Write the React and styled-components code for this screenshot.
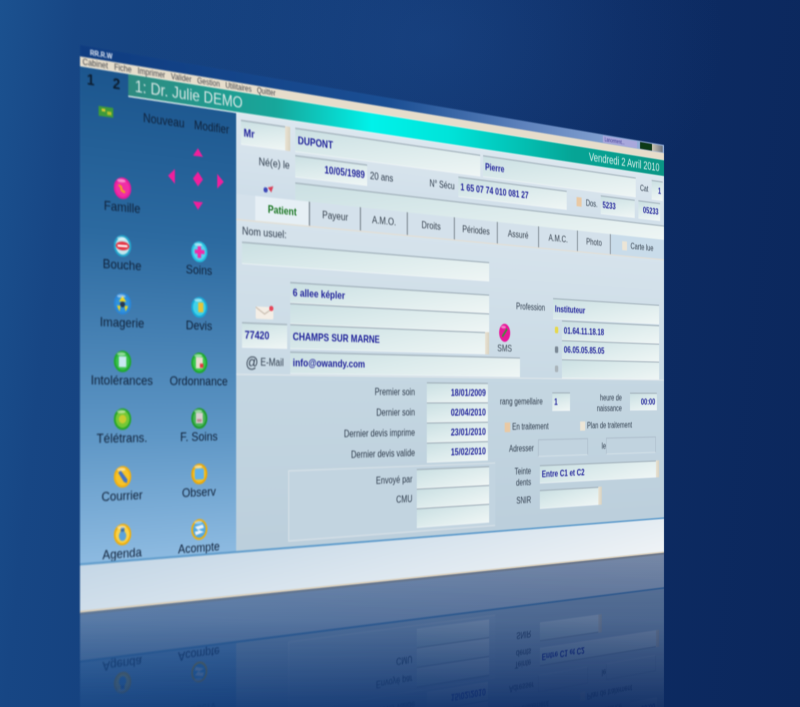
import React from "react";
import styled, { createGlobalStyle } from "styled-components";

const W = 1300;
const H = 800;

/* Projects a flat W x H window on four screen corners (TL, TR, BR, BL). */
function quadMatrix([[x0, y0], [x1, y1], [x2, y2], [x3, y3]]) {
  const dx1 = x1 - x2, dx2 = x3 - x2, sx = x0 - x1 + x2 - x3;
  const dy1 = y1 - y2, dy2 = y3 - y2, sy = y0 - y1 + y2 - y3;
  const den = dx1 * dy2 - dx2 * dy1;
  const g = (sx * dy2 - dx2 * sy) / den;
  const h = (dx1 * sy - sx * dy1) / den;
  const a = x1 - x0 + g * x1, b = x3 - x0 + h * x3;
  const d = y1 - y0 + g * y1, e = y3 - y0 + h * y3;
  return `matrix3d(${a / W},${d / W},0,${g / W},${b / H},${e / H},0,${h / H},0,0,1,0,${x0},${y0},0,1)`;
}
const FRONT = quadMatrix([[80, 45], [664, 145], [664, 553], [80, 613]]);
const MIRROR = quadMatrix([[80, 1181], [664, 961], [664, 553], [80, 613]]);

const Global = createGlobalStyle`
  html, body { margin: 0; padding: 0; background: #0e2f68; }
`;

const Stage = styled.div`
  position: relative;
  width: 800px;
  height: 707px;
  overflow: hidden;
  font-family: "Liberation Sans", Arial, sans-serif;
  background:
    radial-gradient(420px 300px at 430px 40px, rgba(40, 90, 160, 0.28), transparent 70%),
    linear-gradient(96deg, #1b518f 0%, #174684 9%, #123a76 38%, #0d2c64 72%, #0b275c 100%);
`;

const Plane = styled.div`
  position: absolute;
  left: 0;
  top: 0;
  width: ${W}px;
  height: ${H}px;
  transform-origin: 0 0;
  transform: ${(p) => (p.$mirror ? MIRROR : FRONT)};
  filter: blur(0.85px);
`;

const ReflectionFade = styled.div`
  position: absolute;
  inset: 0;
  mask-image: linear-gradient(180deg, rgba(0,0,0,0.48) 550px, rgba(0,0,0,0.36) 620px, rgba(0,0,0,0.06) 707px);
`;

const Win = styled.div`
  width: 100%;
  height: 100%;
  display: flex;
  flex-direction: column;
  color: #27374a;
  font-size: 17px;
`;

const TitleBar = styled.div`
  height: 16px;
  display: flex;
  align-items: center;
  justify-content: space-between;
  padding: 0 4px 0 16px;
  background: linear-gradient(90deg, #0f3c80 0%, #1b4f94 45%, #5f83bd 70%, #9cb6de 100%);
`;
const AppName = styled.span`
  font-size: 10px;
  font-weight: bold;
  color: #e8eef8;
`;
const Tray = styled.div`
  display: flex;
  align-items: center;
`;
const TrayText = styled.span`
  font-size: 10px;
  color: #35318e;
  background: #a9a8dc;
  padding: 0 5px;
  width: 100px;
  margin-right: 9px;
  box-sizing: border-box;
  line-height: 13px;
`;
const TrayGauge = styled.span`
  width: 36px;
  height: 13px;
  box-sizing: border-box;
  background: #0c3a16;
  border: 1px solid #05230b;
`;
const TrayButtons = styled.span`
  width: 33px;
  height: 13px;
  background: linear-gradient(90deg, #cfc7b4, #6d7480);
`;

const MenuBar = styled.div`
  height: 14px;
  display: flex;
  align-items: center;
  gap: 10px;
  padding-left: 4px;
  background: #e6ddcb;
  border-bottom: 1px solid #f4efe4;
  box-sizing: border-box;
`;
const MenuItem = styled.span`
  font-size: 12px;
  line-height: 14px;
  color: #44464c;
`;

const Body = styled.div`
  flex: 1;
  min-height: 0;
  display: flex;
  flex-direction: column;
  background: linear-gradient(180deg, #1c568e 0%, #2c6aa0 30%, #5f97c6 68%, #8fbce2 92%);
`;
const HeadRow = styled.div`
  height: 33px;
  flex: none;
  display: flex;
`;
const Numbers = styled.div`
  width: 79px;
  display: flex;
  gap: 30px;
  padding-left: 11px;
  box-sizing: border-box;
  align-items: center;
  font-size: 22px;
  font-weight: bold;
  color: #0c1c2e;
`;
const Band = styled.div`
  flex: 1;
  display: flex;
  justify-content: space-between;
  align-items: center;
  padding: 0 14px 0 11px;
  background: linear-gradient(90deg, #2f8a80 0%, #17a79b 22%, #00f2ea 38%, #00e4da 52%, #06a596 78%, #0a9585 100%);
  border-bottom: 2px solid #e3edf0;
  box-sizing: border-box;
`;
const BandTitle = styled.span`
  font-size: 24px;
  color: #dbe8e6;
`;
const BandDate = styled.span`
  font-size: 22px;
  color: #e6f3ef;
`;

const Columns = styled.div`
  height: 667px;
  flex: none;
  display: flex;
`;

const Sidebar = styled.div`
  width: 270px;
  flex: none;
  display: flex;
  flex-direction: column;
  overflow: hidden;
`;
const ToolRow = styled.div`
  height: 47px;
  flex: none;
  padding-top: 8px;
  box-sizing: border-box;
  display: flex;
  align-items: center;
  font-size: 18px;
  color: #0f2038;
`;
const FlagSlot = styled.div`
  width: 100px;
  padding-left: 30px;
  box-sizing: border-box;
`;
const ToolLabel = styled.span`
  width: ${(p) => p.$w}px;
  text-align: center;
`;
const SideColumns = styled.div`
  display: flex;
`;
const IconColumn = styled.div`
  width: ${(p) => p.$w}px;
  display: flex;
  flex-direction: column;
  padding-top: ${(p) => p.$top || 0}px;
  box-sizing: border-box;
`;
const IconItem = styled.div`
  height: 83px;
  flex: none;
  display: flex;
  flex-direction: column;
  align-items: center;
  font-size: 19px;
  line-height: 24px;
  color: #0f2038;
`;
const DPad = styled.div`
  display: grid;
  grid-template-columns: repeat(3, 44px);
  grid-auto-rows: 40px;
  place-items: center;
  width: 132px;
  margin: 0 0 33px -4px;
`;

const Panel = styled.div`
  flex: 1;
  display: flex;
  flex-direction: column;
  min-width: 0;
  background: #cbdbe6;
`;
const IdBlock = styled.div`
  height: 123px;
  flex: none;
  padding-top: 9px;
  box-sizing: border-box;
  display: flex;
  flex-direction: column;
  background: linear-gradient(180deg, #dce7ef, #cfdee9);
`;
const Row = styled.div`
  display: flex;
  flex: none;
  align-items: ${(p) => p.$align || "stretch"};
  height: ${(p) => p.$h}px;
  margin-top: ${(p) => p.$mt || 0}px;
  padding-left: ${(p) => p.$pl || 0}px;
`;
const Label = styled.span`
  display: flex;
  align-items: center;
  justify-content: ${(p) => (p.$right ? "flex-end" : "flex-start")};
  width: ${(p) => (p.$w ? `${p.$w}px` : "auto")};
  margin-left: ${(p) => p.$ml || 0}px;
  flex: none;
  font-size: ${(p) => p.$size || 17}px;
  color: #2d3a4a;
  white-space: nowrap;
`;
const StackLabel = styled.span`
  width: ${(p) => p.$w}px;
  margin-left: ${(p) => p.$ml || 0}px;
  flex: none;
  text-align: right;
  font-size: 16px;
  line-height: 20px;
  color: #2d3a4a;
`;
const Field = styled.div`
  flex: none;
  width: ${(p) => (p.$w ? `${p.$w}px` : "auto")};
  margin-left: ${(p) => p.$ml || 0}px;
  padding: 0 5px;
  box-sizing: border-box;
  display: flex;
  align-items: center;
  justify-content: ${(p) => (p.$right ? "flex-end" : "flex-start")};
  font-size: 17px;
  font-weight: bold;
  color: #1d1f98;
  white-space: nowrap;
  border-top: 2px solid #a2b1bb;
  border-bottom: 1px solid #f4f8f9;
  background: linear-gradient(170deg, #cbe0e3 0%, #dcebec 45%, #eff6f5 100%);
`;
const GreyField = styled.div`
  flex: none;
  width: ${(p) => p.$w}px;
  margin-left: ${(p) => p.$ml || 0}px;
  box-sizing: border-box;
  border: 2px solid #aebfcc;
  border-bottom-color: #d3e0e8;
  background: #c1d3df;
`;
const Wide = styled(Field)`
  flex: 1;
`;
const SideButton = styled.div`
  flex: none;
  width: 10px;
  margin-left: ${(p) => p.$ml || 0}px;
  background: linear-gradient(90deg, #e9e2d2, #d9d2c0);
`;
const Check = styled.span`
  flex: none;
  width: 14px;
  height: 17px;
  align-self: center;
  margin-left: ${(p) => p.$ml || 0}px;
  margin-right: 5px;
  background: ${(p) => (p.$on ? "#e9c9a4" : "#ece5d6")};
`;
const PhoneMark = styled.span`
  flex: none;
  width: 9px;
  height: 12px;
  align-self: center;
  margin-right: 10px;
  border-radius: 3px;
  background: ${(p) => p.$tone};
`;
const Gap = styled.span`
  flex: none;
  width: ${(p) => p.$w}px;
`;

const Tabs = styled.div`
  height: 40px;
  display: flex;
  padding-left: 36px;
  flex: none;
  background: #d4e1eb;
  border-bottom: 2px solid #e4dfd5;
  box-sizing: border-box;
`;
const Tab = styled.div`
  width: ${(p) => p.$w}px;
  flex: ${(p) => (p.$grow ? 1 : "none")};
  display: flex;
  align-items: center;
  justify-content: center;
  gap: 6px;
  box-sizing: border-box;
  font-size: 17px;
  font-weight: ${(p) => (p.$active ? "bold" : "normal")};
  color: ${(p) => (p.$active ? "#17741f" : "#333e4a")};
  background: ${(p) => (p.$active ? "#e6eff5" : p.$grow ? "#c9dcea" : "transparent")};
  border-right: ${(p) => (p.$grow ? "none" : "3px solid #8f9aa3")};
`;

const Upper = styled.div`
  height: 236px;
  flex: none;
  display: flex;
  box-sizing: border-box;
  padding-left: 11px;
  border-bottom: 2px solid #dfe6ea;
  background: linear-gradient(180deg, #d6e3ec, #c9dae5);
`;
const UpperLeft = styled.div`
  width: 612px;
  flex: none;
  display: flex;
  flex-direction: column;
`;
const LabelLine = styled.div`
  height: 32px;
  flex: none;
  display: flex;
  align-items: center;
  font-size: 17px;
  color: #2d3a4a;
`;
const AddressWrap = styled.div`
  display: flex;
  flex: none;
  margin-top: 23px;
`;
const AddressStack = styled.div`
  width: 534px;
  flex: none;
  display: flex;
  flex-direction: column;
`;
const LeadCell = styled.div`
  width: ${(p) => p.$w || 87}px;
  margin-right: 6px;
  padding-left: ${(p) => p.$pl || 0}px;
  box-sizing: border-box;
  flex: none;
  display: flex;
  align-items: center;
  justify-content: center;
`;
const SmsBox = styled.div`
  width: 78px;
  display: flex;
  flex-direction: column;
  align-items: center;
  padding-top: 50px;
  font-size: 17px;
  gap: 2px;
  color: #3a4652;
`;
const UpperRight = styled.div`
  flex: 1;
  display: flex;
  flex-direction: column;
  margin-left: -10px;
  padding-top: 88px;
  padding-right: 15px;
`;

const Lower = styled.div`
  flex: 1;
  min-height: 0;
  display: flex;
  background: linear-gradient(180deg, #c5d7e2, #bccfdc);
`;
const LowerLeft = styled.div`
  width: 560px;
  flex: none;
  display: flex;
  flex-direction: column;
  padding: 8px 0 0 100px;
  box-sizing: border-box;
`;
const DateRow = styled.div`
  height: 34px;
  flex: none;
  display: flex;
  justify-content: flex-end;
  padding-right: 18px;
`;
const SenderBox = styled.div`
  margin-top: 4px;
  height: 112px;
  flex: none;
  box-sizing: border-box;
  border: 2px solid #d6e0e7;
  border-right: none;
  background: #c2d4e0;
  padding: 4px 0 0 0;
  display: flex;
  flex-direction: column;
`;
const SenderRow = styled.div`
  height: 33px;
  flex: none;
  display: flex;
  justify-content: flex-end;
  padding-right: 15px;
`;
const LowerRight = styled.div`
  flex: 1;
  display: flex;
  flex-direction: column;
  padding: 24px 0 0 12px;
`;

const Footer = styled.div`
  height: 70px;
  flex: none;
  background: linear-gradient(172deg, #c5d7e6 0%, #dbe6ef 50%, #eff3f6 100%);
  border-top: 3px solid #5e9bcb;
  border-bottom: 3px solid #d7ccb8;
  box-sizing: border-box;
`;

const ORBS = {
  Famille: {
    ring: "#ea1a9c",
    core: "#f02ea6",
    art: <path d="M8 10l5 2 1 5 5 2-2 3-6-3-1-5-3-2z" fill="#f4a11e" />,
  },
  Bouche: {
    ring: "#22a6cc",
    core: "#bfe8f0",
    art: (
      <>
        <ellipse cx="14" cy="15" rx="11" ry="6" fill="#e5303f" />
        <rect x="6" y="13.5" width="16" height="3" fill="#fff" />
      </>
    ),
  },
  Soins: {
    ring: "#25bfe0",
    core: "#57d4ee",
    art: <path d="M11 7h6v5h6v6h-6v6h-6v-6H6v-6h5z" fill="#f22ba6" />,
  },
  Imagerie: {
    ring: "#2a86d8",
    core: "#2f93df",
    art: (
      <>
        <path d="M14 4l6 8h-12z" fill="#f0d620" />
        <path d="M5 18l6 0-2 8z" fill="#f0d620" />
        <path d="M23 18l-6 0 2 8z" fill="#f0d620" />
        <circle cx="14" cy="16" r="4" fill="#26364f" />
      </>
    ),
  },
  Devis: {
    ring: "#19a8d8",
    core: "#3fd2ea",
    art: <rect x="12" y="8" width="9" height="14" rx="1" fill="#e6c33a" />,
  },
  "Intolérances": {
    ring: "#1fa82e",
    core: "#38c04a",
    art: <rect x="8" y="8" width="12" height="15" rx="1" fill="#c9e8f2" />,
  },
  Ordonnance: {
    ring: "#1fa82e",
    core: "#3cc64e",
    art: (
      <>
        <rect x="8" y="7" width="12" height="16" fill="#e8dcd0" />
        <rect x="15" y="16" width="6" height="6" fill="#e2353f" />
      </>
    ),
  },
  "Télétrans.": {
    ring: "#26a52a",
    core: "#74c836",
    art: <circle cx="14" cy="15" r="6" fill="#c9cc30" />,
  },
  "F. Soins": {
    ring: "#1f9a2c",
    core: "#47b457",
    art: (
      <>
        <rect x="8" y="7" width="12" height="15" fill="#d9cfcf" />
        <rect x="10" y="16" width="8" height="4" fill="#b98a92" />
      </>
    ),
  },
  Courrier: {
    ring: "#f2b010",
    core: "#f6c32a",
    art: <path d="M7 9l4-3 11 13-1 5-5-2z" fill="#3f71c8" />,
  },
  Observ: {
    ring: "#e8a80c",
    core: "#f2c22c",
    art: <rect x="6" y="7" width="16" height="16" rx="3" fill="#5fb2ea" />,
  },
  Agenda: {
    ring: "#eeae0e",
    core: "#f8d24a",
    art: (
      <>
        <ellipse cx="14" cy="17" rx="6" ry="7" fill="#5aa3dc" />
        <rect x="11" y="5" width="6" height="6" fill="#3a6ea8" />
      </>
    ),
  },
  Acompte: {
    ring: "#eeae0e",
    core: "#4fa8e4",
    art: <path d="M6 11l14-3 2 5-10 2 10 4-14 4-2-5 7-1z" fill="#e9f2f8" />,
  },
};

function Orb({ name }) {
  const o = ORBS[name];
  return (
    <svg width="29" height="31" viewBox="0 0 28 30">
      <ellipse cx="14" cy="15" rx="14" ry="15" fill={o.ring} />
      <ellipse cx="14" cy="15" rx="11" ry="12" fill={o.core} />
      {o.art}
      <ellipse cx="12" cy="4.5" rx="7" ry="2.4" fill="#ffffff" opacity="0.45" />
    </svg>
  );
}

function Arrow({ dir }) {
  const pts = {
    up: "9,0 18,12 0,12",
    down: "0,0 18,0 9,12",
    left: "12,0 12,22 0,11",
    right: "0,0 12,11 0,22",
    mid: "9,0 18,11 9,22 0,11",
  }[dir];
  const tall = dir === "left" || dir === "right" || dir === "mid";
  return (
    <svg width="18" height={tall ? 22 : 12} viewBox={`0 0 18 ${tall ? 22 : 12}`}>
      <polygon points={pts} fill="#f01f9c" />
    </svg>
  );
}

function Flag() {
  return (
    <svg width="24" height="14" viewBox="0 0 24 14">
      <rect width="24" height="14" fill="#3e9a3a" />
      <rect x="5" y="3" width="6" height="4" fill="#d4c832" />
      <rect x="14" y="6" width="7" height="5" fill="#b3c02e" />
    </svg>
  );
}
function Envelope() {
  return (
    <svg width="38" height="24" viewBox="0 0 38 24">
      <rect x="1" y="3" width="34" height="19" rx="2" fill="#f4eee6" />
      <path d="M1 4l17 10L35 4" fill="none" stroke="#c9bdb0" strokeWidth="2" />
      <circle cx="31" cy="5" r="4" fill="#e6475a" />
    </svg>
  );
}
function HeartMark() {
  return (
    <svg width="22" height="14" viewBox="0 0 22 14">
      <circle cx="6" cy="8" r="4" fill="#3d49b8" />
      <path d="M10 4l11-3-4 10z" fill="#d9415a" />
    </svg>
  );
}
function SmsOrb() {
  return (
    <svg width="28" height="32" viewBox="0 0 28 32">
      <ellipse cx="14" cy="16" rx="14" ry="16" fill="#e8189a" />
      <path d="M8 23L20 9" stroke="#3f8f3a" strokeWidth="4" />
      <ellipse cx="11" cy="6" rx="6" ry="2.5" fill="#fff" opacity="0.45" />
    </svg>
  );
}

const LEFT = ["Famille", "Bouche", "Imagerie", "Intolérances", "Télétrans.", "Courrier", "Agenda"];
const RIGHT = ["Soins", "Devis", "Ordonnance", "F. Soins", "Observ", "Acompte"];
const MENUS = ["Cabinet", "Fiche", "Imprimer", "Valider", "Gestion", "Utilitaires", "Quitter"];
const TABS = [
  ["Patient", 108],
  ["Payeur", 106],
  ["A.M.O.", 103],
  ["Droits", 109],
  ["Périodes", 105],
  ["Assuré", 106],
  ["A.M.C.", 105],
  ["Photo", 93],
];
const DATES = [
  ["Premier soin", "18/01/2009"],
  ["Dernier soin", "02/04/2010"],
  ["Dernier devis imprime", "23/01/2010"],
  ["Dernier devis valide", "15/02/2010"],
];

function Screen() {
  return (
    <Win>
      <TitleBar>
        <AppName>RR.R.W</AppName>
        <Tray>
          <TrayText>Lancement...</TrayText>
          <TrayGauge />
          <TrayButtons />
        </Tray>
      </TitleBar>
      <MenuBar>
        {MENUS.map((m) => (
          <MenuItem key={m}>{m}</MenuItem>
        ))}
      </MenuBar>
      <Body>
        <HeadRow>
          <Numbers>
            <span>1</span>
            <span>2</span>
          </Numbers>
          <Band>
            <BandTitle>1: Dr. Julie DEMO</BandTitle>
            <BandDate>Vendredi 2 Avril 2010</BandDate>
          </Band>
        </HeadRow>
        <Columns>
          <Sidebar>
            <ToolRow>
              <FlagSlot>
                <Flag />
              </FlagSlot>
              <ToolLabel $w={80}>Nouveau</ToolLabel>
              <ToolLabel $w={90}>Modifier</ToolLabel>
            </ToolRow>
            <SideColumns>
              <IconColumn $w={138} $top={70}>
                {LEFT.map((n) => (
                  <IconItem key={n}>
                    <Orb name={n} />
                    {n}
                  </IconItem>
                ))}
              </IconColumn>
              <IconColumn $w={128}>
                <DPad>
                  <span />
                  <Arrow dir="up" />
                  <span />
                  <Arrow dir="left" />
                  <Arrow dir="mid" />
                  <Arrow dir="right" />
                  <span />
                  <Arrow dir="down" />
                  <span />
                </DPad>
                {RIGHT.map((n) => (
                  <IconItem key={n}>
                    <Orb name={n} />
                    {n}
                  </IconItem>
                ))}
              </IconColumn>
            </SideColumns>
          </Sidebar>
          <Panel>
            <IdBlock>
              <Row $h={38} $pl={9}>
                <Field $w={85}>Mr</Field>
                <SideButton />
                <Field $w={409} $ml={10}>DUPONT</Field>
                <Field $w={414} $ml={7}>Pierre</Field>
                <Label $w={35} $ml={13} $size={16}>Cat</Label>
                <Field $w={34} $right>1</Field>
              </Row>
              <Row $h={35} $mt={5}>
                <Label $w={103} $right>Né(e) le</Label>
                <Field $w={149} $ml={11} $right>10/05/1989</Field>
                <Label $ml={6}>20 ans</Label>
                <Label $w={63} $ml={78} $right $size={16}>N° Sécu</Label>
                <Field $w={277} $ml={9}>1 65 07 74 010 081 27</Field>
                <Check $ml={27} $on />
                <Label $w={37} $ml={7} $size={16}>Dos.</Label>
                <Field $w={99} $ml={5}>5233</Field>
                <Field $w={66} $ml={11} $right>05233</Field>
              </Row>
              <Row $h={31} $mt={8}>
                <LeadCell $w={108} $pl={14}>
                  <HeartMark />
                </LeadCell>
                <Wide />
              </Row>
            </IdBlock>
            <Tabs>
              {TABS.map(([t, w], i) => (
                <Tab key={t} $w={w} $active={i === 0}>
                  {t}
                </Tab>
              ))}
              <Tab $grow>
                <Check $on={false} />
                Carte lue
              </Tab>
            </Tabs>
            <Upper>
              <UpperLeft>
                <LabelLine>Nom usuel:</LabelLine>
                <Row $h={34}>
                  <Field $w={534} />
                </Row>
                <AddressWrap>
                  <AddressStack>
                    <Row $h={33}>
                      <Gap $w={93} />
                      <Wide>6 allee képler</Wide>
                    </Row>
                    <Row $h={33}>
                      <LeadCell>
                        <Envelope />
                      </LeadCell>
                      <Wide />
                    </Row>
                    <Row $h={39}>
                      <Field $w={87}>77420</Field>
                      <Gap $w={6} />
                      <Wide>CHAMPS SUR MARNE</Wide>
                      <SideButton />
                    </Row>
                  </AddressStack>
                  <SmsBox>
                    <SmsOrb />
                    SMS
                  </SmsBox>
                </AddressWrap>
                <Row $h={35} $mt={4}>
                  <LeadCell>
                    <Label $size={24}>@</Label>
                    <Label $size={16} $ml={4}>E-Mail</Label>
                  </LeadCell>
                  <Wide>info@owandy.com</Wide>
                </Row>
              </UpperLeft>
              <UpperRight>
                <Row $h={38}>
                  <Label $w={83} $size={16}>Profession</Label>
                  <Field $w={305} $ml={14}>Instituteur</Field>
                </Row>
                <Row $h={36} $mt={2}>
                  <Gap $w={102} />
                  <PhoneMark $tone="#e6d84c" />
                  <Field $w={281}>01.64.11.18.18</Field>
                </Row>
                <Row $h={35}>
                  <Gap $w={102} />
                  <PhoneMark $tone="#7a8794" />
                  <Field $w={281}>06.05.05.85.05</Field>
                </Row>
                <Row $h={35}>
                  <Gap $w={102} />
                  <PhoneMark $tone="#aab4ba" />
                  <Field $w={281} />
                </Row>
              </UpperRight>
            </Upper>
            <Lower>
              <LowerLeft>
                {DATES.map(([l, v]) => (
                  <DateRow key={l}>
                    <Label $size={16}>{l}</Label>
                    <Gap $w={27} />
                    <Field $w={146} $right>{v}</Field>
                  </DateRow>
                ))}
                <SenderBox>
                  <SenderRow>
                    <Label $size={16}>Envoyé par</Label>
                    <Gap $w={10} />
                    <Field $w={172} />
                  </SenderRow>
                  <SenderRow>
                    <Label $size={16}>CMU</Label>
                    <Gap $w={10} />
                    <Field $w={172} />
                  </SenderRow>
                  <SenderRow>
                    <Gap $w={10} />
                    <Field $w={172} />
                  </SenderRow>
                </SenderBox>
              </LowerLeft>
              <LowerRight>
                <Row $h={34}>
                  <Label $w={111} $size={16}>rang gemellaire</Label>
                  <Field $w={48} $ml={25}>1</Field>
                  <StackLabel $w={100} $ml={47}>heure de naissance</StackLabel>
                  <Field $w={81} $ml={24} $right>00:00</Field>
                </Row>
                <Row $h={24} $mt={16} $align="center">
                  <Check $ml={12} $on />
                  <Label $size={16}>En traitement</Label>
                  <Check $ml={86} />
                  <Label $size={16}>Plan de traitement</Label>
                </Row>
                <Row $h={32} $mt={11}>
                  <Label $w={87} $right $size={16}>Adresser</Label>
                  <GreyField $w={136} $ml={11} />
                  <Label $w={51} $right $size={16}>le</Label>
                  <GreyField $w={148} />
                </Row>
                <Row $h={33} $mt={15}>
                  <StackLabel $w={80}>Teinte<br />dents</StackLabel>
                  <Field $w={330} $ml={23}>Entre C1 et C2</Field>
                  <SideButton />
                </Row>
                <Row $h={34} $mt={12}>
                  <Label $w={80} $right $size={16}>SNIR</Label>
                  <Field $w={160} $ml={23} />
                  <SideButton />
                </Row>
              </LowerRight>
            </Lower>
          </Panel>
        </Columns>
        <Footer />
      </Body>
    </Win>
  );
}

export default function App() {
  return (
    <Stage>
      <Global />
      <ReflectionFade>
        <Plane $mirror aria-hidden="true">
          <Screen />
        </Plane>
      </ReflectionFade>
      <Plane>
        <Screen />
      </Plane>
    </Stage>
  );
}
